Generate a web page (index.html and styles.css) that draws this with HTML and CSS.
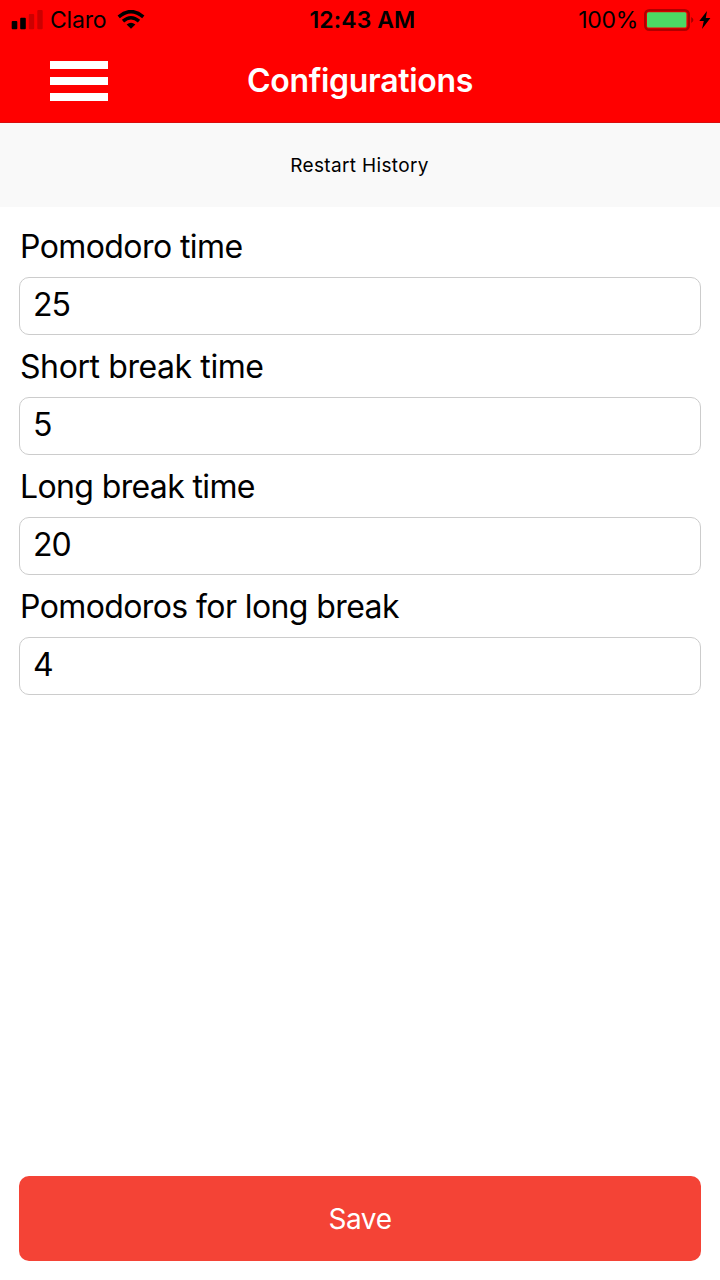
FILE: index.html
```html
<!DOCTYPE html>
<html lang="en">
<head>
<meta charset="utf-8">
<title>Configurations</title>
<link rel="stylesheet" href="styles.css">
</head>
<body>
<header class="header">
  <div class="status">
    <div class="carrier">
      <svg class="signal" width="32" height="20" viewBox="0 0 32 20"><rect x=".7" y="11" width="5.6" height="8.3" rx="1"/><rect x="9.2" y="7.8" width="5.6" height="11.5" rx="1"/><rect class="dim" x="17.8" y="4" width="5.4" height="15.3" rx="1"/><rect class="dim" x="26.3" y="0" width="5.4" height="19.3" rx="1"/></svg>
      <span class="operator">Claro</span>
      <svg class="wifi" width="28" height="20" viewBox="0 0 28 20"><path d="M1.7 6.8Q14-3.6 26.3 6.8M6 11.2q8-6.8 16 0" fill="none" stroke="#000" stroke-width="3.5"/><path d="M9.6 14.6q4.4-3.6 8.8 0L14 18.8z"/></svg>
    </div>
    <span class="clock">12:43 AM</span>
    <div class="power">
      <span class="percent">100%</span>
      <svg class="battery" width="50" height="24" viewBox="0 0 50 24"><rect x="1.2" y="2.2" width="43.6" height="19.6" rx="4" fill="none" stroke="#b00000" stroke-width="2.4"/><rect x="3" y="4.2" width="39.4" height="15.4" rx="1.5" fill="#4cd964"/><path d="M47.2 9q4.5 3 0 6z" fill="#a00000"/></svg>
      <svg class="bolt" width="12" height="18" viewBox="0 0 12 18"><path d="M8 0 .3 10h4.5L3 18 11.4 7H6.8z"/></svg>
    </div>
  </div>
  <div class="nav">
    <button class="menu" aria-label="Menu"><span></span><span></span><span></span></button>
    <h1 class="title">Configurations</h1>
  </div>
</header>
<button class="restart">Restart History</button>
<main class="form">
  <label class="field"><span class="label pomodoro">Pomodoro time</span><input value="25"></label>
  <label class="field"><span class="label short">Short break time</span><input value="5"></label>
  <label class="field"><span class="label long">Long break time</span><input value="20"></label>
  <label class="field"><span class="label count">Pomodoros for long break</span><input value="4"></label>
</main>
<footer class="footer"><button class="save">Save</button></footer>
</body>
</html>
```
FILE: styles.css
```css
* { box-sizing: border-box; }
body { margin: 0; height: 1280px; display: flex; flex-direction: column; background: #fff; color: #000; font-family: Inter, sans-serif; }
button { border: 0; padding: 0; font-family: inherit; }
svg { display: block; }
.header { height: 123px; background: #f00; border-bottom: 1px solid #d90d0d; }
.status { height: 40px; display: grid; grid-template-columns: 1fr 112px 1fr; padding: 0 9px 0 11px; align-items: center; }
.carrier, .power { display: flex; align-items: center; }
.power { justify-content: flex-end; }
.operator { width: 58px; margin-left: 7px; font-size: 23px; letter-spacing: -.2px; }
.percent { font-size: 23px; letter-spacing: -.3px; }
.clock { padding-left: 3px; font-size: 23px; font-weight: 600; letter-spacing: .1px; text-align: center; white-space: nowrap; }
.wifi { margin-left: 9px; }
.signal { margin-bottom: 1px; }
.battery { margin-left: 6px; }
.bolt { margin-left: 5px; }
.dim { fill: #cc0000; }
.nav { height: 82px; display: grid; grid-template-columns: 108px 1fr 108px; align-items: center; }
.menu { width: 58px; height: 40px; margin: 0 0 1px 50px; background: none; display: flex; flex-direction: column; justify-content: space-between; }
.menu span { width: 58px; height: 8px; background: #fff; }
.title { margin: 0 0 2px; text-align: center; color: #fff; font-size: 32px; font-weight: 600; letter-spacing: -.3px; }
.restart { height: 84px; background: #f9f9f9; color: #000; font-size: 19px; letter-spacing: .35px; padding-right: 1px; }
.form { padding: 10px 19px; flex: 1; }
.field { display: flex; flex-direction: column; height: 120px; }
.label { height: 60px; padding-left: 1px; line-height: 59px; font-size: 32px; white-space: nowrap; }
.pomodoro { letter-spacing: -.58px; }
.short { letter-spacing: -.41px; }
.long { letter-spacing: -.63px; }
.count { letter-spacing: -.6px; }
input { height: 58px; padding: 0 13px 3px; border: 1px solid #ccc; border-radius: 10px; background: #fff; color: #000; font: 32px Inter, sans-serif; letter-spacing: -1px; }
.footer { padding: 0 19px 19px; }
.save { width: 100%; height: 85px; border-radius: 10px; background: #f44336; color: #fff; font-size: 28px; letter-spacing: -.4px; }
```
